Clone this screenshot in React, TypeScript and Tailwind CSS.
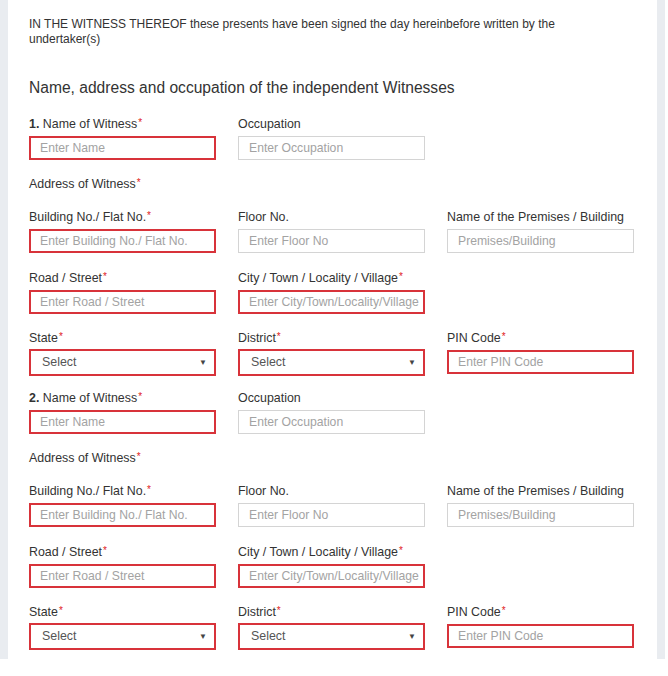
import React from "react"

const font = { fontFamily: '"Liberation Sans", Arial, sans-serif' }

function Req() {
  return <span className="text-[#e0201b] text-[10px] align-top relative top-[-1px] ml-[1px]">*</span>
}

function Label({ children, required }: { children: React.ReactNode; required?: boolean }) {
  return (
    <div className="text-[12.4px] leading-[14px] text-[#333] h-[14px] whitespace-nowrap">
      {children}
      {required && <Req />}
    </div>
  )
}

function TextInput({ placeholder, error }: { placeholder: string; error?: boolean }) {
  return (
    <div
      className={
        error
          ? "h-[24px] border-2 border-[#d8333a] bg-white flex items-center pl-[9px] overflow-hidden"
          : "h-[24px] border border-[#d4d4d4] bg-white flex items-center pl-[10px] overflow-hidden"
      }
    >
      <span className="text-[12.2px] text-[#a3a3a3] whitespace-nowrap">{placeholder}</span>
    </div>
  )
}

function SelectBox() {
  return (
    <div className="h-[27px] border-2 border-[#d8333a] bg-white flex items-center justify-between pl-[11px] pr-[7px]">
      <span className="text-[12.4px] text-[#555]">Select</span>
      <span className="text-[8px] text-[#444]">▼</span>
    </div>
  )
}

function Field({
  label,
  placeholder,
  required,
  error,
  select,
}: {
  label: React.ReactNode
  placeholder?: string
  required?: boolean
  error?: boolean
  select?: boolean
}) {
  return (
    <div>
      <Label required={required}>{label}</Label>
      <div className={select ? "mt-[4px]" : "mt-[5px]"}>
        {select ? <SelectBox /> : <TextInput placeholder={placeholder ?? ""} error={error} />}
      </div>
    </div>
  )
}

function Row({ children, className }: { children: React.ReactNode; className?: string }) {
  return <div className={`grid grid-cols-[187px_187px_187px] gap-x-[22px] ${className ?? ""}`}>{children}</div>
}

function Witness({ n, first }: { n: number; first?: boolean }) {
  return (
    <>
      <Row className={first ? "mt-[19px]" : "mt-[15px]"}>
        <Field
          label={
            <>
              <b>{n}.</b> Name of Witness
            </>
          }
          placeholder="Enter Name"
          required
          error
        />
        <Field label="Occupation" placeholder="Enter Occupation" />
      </Row>
      <div className="mt-[17px]">
        <Label required>Address of Witness</Label>
      </div>
      <Row className="mt-[19px]">
        <Field label="Building No./ Flat No." placeholder="Enter Building No./ Flat No." required error />
        <Field label="Floor No." placeholder="Enter Floor No" />
        <Field label="Name of the Premises / Building" placeholder="Premises/Building" />
      </Row>
      <Row className="mt-[18px]">
        <Field label="Road / Street" placeholder="Enter Road / Street" required error />
        <Field label="City / Town / Locality / Village" placeholder="Enter City/Town/Locality/Village" required error />
      </Row>
      <Row className="mt-[17px]">
        <Field label="State" required select />
        <Field label="District" required select />
        <Field label="PIN Code" placeholder="Enter PIN Code" required error />
      </Row>
    </>
  )
}

export default function App() {
  return (
    <div className="w-[668px] h-[676px] bg-white" style={font}>
      <div className="w-[665px] bg-[#e9ecf0] px-[8px]">
        <div className="bg-white pl-[21px] pr-[20px] pt-[17px] pb-[9px]">
          <p className="text-[12px] leading-[15px] text-[#333]">
            IN THE WITNESS THEREOF these presents have been signed the day hereinbefore written by the
            <br />
            undertaker(s)
          </p>
          <h2 className="mt-[31px] text-[15.6px] leading-[20px] text-[#333]">
            Name, address and occupation of the independent Witnesses
          </h2>
          <Witness n={1} first />
          <Witness n={2} />
        </div>
      </div>
    </div>
  )
}
